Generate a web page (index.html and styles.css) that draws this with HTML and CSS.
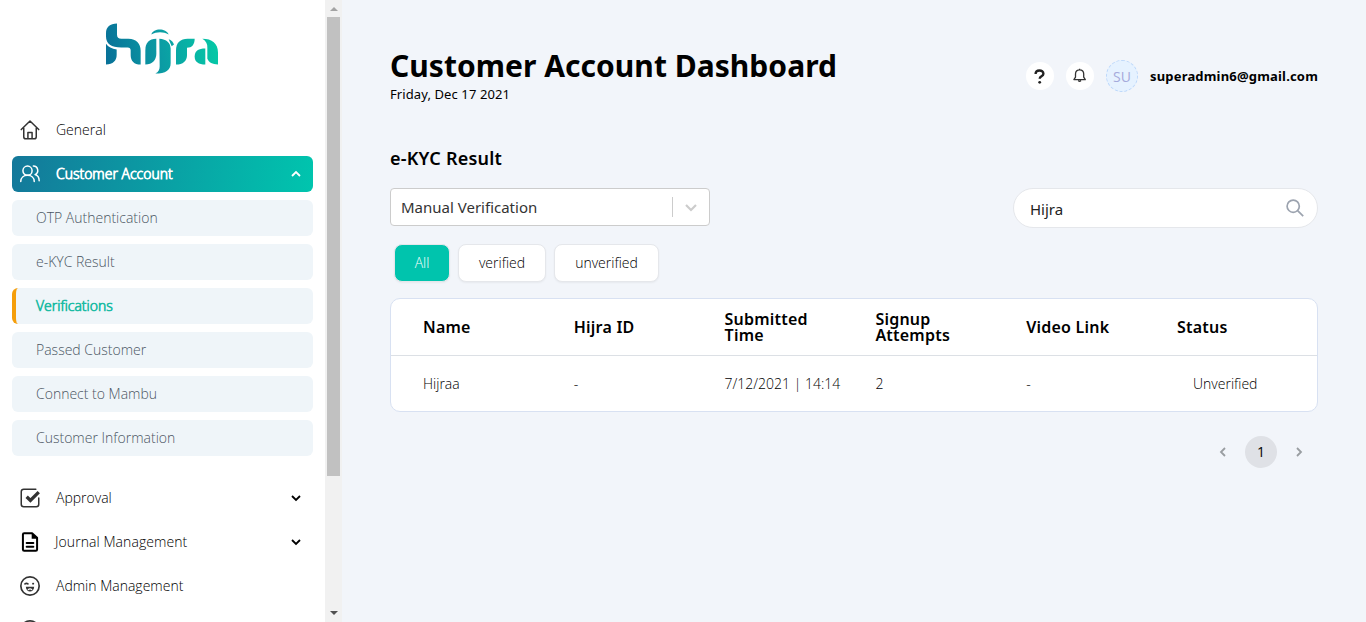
FILE: index.html
```html
<!DOCTYPE html>
<html lang="en">
<head>
<meta charset="utf-8">
<title>Customer Account Dashboard</title>
<link rel="stylesheet" href="styles.css">
</head>
<body>
<div class="app">
  <aside class="sidebar">
    <div class="brand">
      <svg class="logo" viewBox="48 38 336 152" role="img" aria-label="hijra">
        <defs>
          <linearGradient id="brand" gradientUnits="userSpaceOnUse" x1="48" y1="150" x2="384" y2="100">
            <stop offset="0" stop-color="#087198"/><stop offset=".5" stop-color="#0b9da4"/><stop offset="1" stop-color="#05c9a6"/>
          </linearGradient>
        </defs>
        <g fill="url(#brand)">
          <path d="M81 39v33q0 13 13 13h21c25 0 37 15 37 36v41c-20 0-30-11-30-28v-14q0-9-9-9H94C64 111 48 100 48 78V68C48 50 60 39 81 39z"/>
          <path d="M48 100c7 10 17 15 32 17v16c0 18-11 29-32 29z"/>
          <path d="M184 72c6-20 44-20 52 0-16-9-36-9-52 0z"/>
          <path d="M166 162v-43c0-21 11-34 33-34v44c0 20-12 33-33 33z"/>
          <path d="M208 85c22 2 33 12 34 29v44c0 21-15 31-46 31 10-5 13-12 13-22z"/>
          <path d="M236 86c8 2 13 8 16 16l-7 5z"/>
          <path d="M258 162v-42c0-23 13-35 35-35h21c0 17-8 27-23 27v22c0 17-12 28-33 28z"/>
          <path d="M337 85c29 0 47 14 47 41v36c-17 0-27-6-32-17V112c1-11-4-20-15-27z"/>
          <path d="M346 114v48c-20 0-32-7-32-24s12-24 32-24z"/>
        </g>
      </svg>
    </div>
    <nav class="nav">
      <a class="item">
        <svg class="icon" viewBox="0 0 24 24"><path d="M1.500 11.500 12 1.300l10.500 10.200M4.500 10v10q0 2.500 2.500 2.500h10q2.500 0 2.500-2.500V10M9.500 22v-7h5V22"/></svg>
        <span>General</span>
      </a>
      <a class="item open">
        <svg class="icon" viewBox="0 0 24 24"><circle cx="9" cy="8" r="5.500"/><path d="M.9 21c0-4.500 3.500-7.500 8.100-7.500s8.100 3 8.100 7.500M16 2.500a5.300 5.300 0 0 1 2 10.200c3 .8 5 4 5 7.500"/></svg>
        <span>Customer Account</span>
        <svg class="chev" viewBox="0 0 10 10"><path d="m1 7 4-4 4 4"/></svg>
      </a>
      <div class="sub">
        <a class="child">OTP Authentication</a>
        <a class="child">e-KYC Result</a>
        <a class="child current">Verifications</a>
        <a class="child">Passed Customer</a>
        <a class="child">Connect to Mambu</a>
        <a class="child">Customer Information</a>
      </div>
      <a class="item">
        <svg class="icon" viewBox="0 0 24 24"><path d="M19 1.500H4.500q-3 0-3 3v15q0 3 3 3h15q3 0 3-3V12"/><path class="tick" d="m8 10.500 4.500 4.500 10-10"/></svg>
        <span>Approval</span>
        <svg class="chev" viewBox="0 0 10 10"><path d="m1 3 4 4 4-4"/></svg>
      </a>
      <a class="item">
        <svg class="icon file" viewBox="0 0 24 24"><path d="M14.500 1.500H5q-1.500 0-1.500 1.500v18q0 1.500 1.500 1.500h14q1.500 0 1.500-1.500V7z"/><path class="fold" d="M14 1v7h7z"/><path d="M8 13.200h8M8 17.800h8"/></svg>
        <span class="journal">Journal Management</span>
        <svg class="chev" viewBox="0 0 10 10"><path d="m1 3 4 4 4-4"/></svg>
      </a>
      <a class="item">
        <svg class="icon face" viewBox="0 0 24 24"><circle cx="12" cy="12" r="11"/><path d="M6 9.500q1.800-1.500 3.500 0M15.500 9.200h.5"/><path class="mouth" d="M7 13h10c0 7.500-10 7.500-10 0z"/><path class="tongue" d="M10 16.300q2-1.500 4 0"/></svg>
        <span>Admin Management</span>
      </a>
      <a class="item">
        <svg class="icon face" viewBox="0 0 24 24"><circle cx="12" cy="12" r="11"/></svg>
      </a>
    </nav>
  </aside>
  <div class="scrollbar">
    <svg class="arrow up" viewBox="0 0 8 4"><path d="M0 4 4 0l4 4z"/></svg>
    <div class="thumb"></div>
    <svg class="arrow" viewBox="0 0 8 4"><path d="m0 0 4 4 4-4z"/></svg>
  </div>
  <main class="main">
    <header class="header">
      <div>
        <h1 class="title">Customer Account Dashboard</h1>
        <p class="date">Friday, Dec 17 2021</p>
      </div>
      <div class="user">
        <span class="round"><svg viewBox="0 0 16 16"><path class="question" d="M3.600 6C3.600 1.400 11.400 1.400 11.400 5.800c0 2.700-3.700 2.400-3.700 5"/><circle class="dot" cx="7.700" cy="14.300" r="1.400"/></svg></span>
        <span class="round"><svg viewBox="0 0 16 16"><path class="bell" d="M1.900 11.600 3.500 9.100V6c0-5.600 8.200-5.600 8.200 0v3.100l1.600 2.500zM6.300 12.500q1.300 1.700 2.600 0M7.600 1.800V.7"/></svg></span>
        <span class="avatar">SU</span>
        <span class="email">superadmin6@gmail.com</span>
      </div>
    </header>
    <h2 class="section">e-KYC Result</h2>
    <div class="controls">
      <div class="select">
        <span class="value">Manual Verification</span>
        <span class="caret"><svg viewBox="0 0 20 20"><path d="m5 8 5 5 5-5"/></svg></span>
      </div>
      <div class="search">
        <span>Hijra</span>
        <svg viewBox="0 0 18 18"><circle cx="7.200" cy="7.200" r="6.100"/><path d="m11.600 11.600 5.600 5.600"/></svg>
      </div>
    </div>
    <div class="filters">
      <button class="pill on">All</button>
      <button class="pill verified">verified</button>
      <button class="pill unverified">unverified</button>
    </div>
    <section class="table">
      <div class="row head">
        <div>Name</div><div>Hijra ID</div><div>Submitted<br>Time</div><div>Signup<br>Attempts</div><div>Video Link</div><div>Status</div>
      </div>
      <div class="row">
        <div>Hijraa</div><div>-</div><div class="time">7/12/2021 | 14:14</div><div>2</div><div>-</div><div class="status">Unverified</div>
      </div>
    </section>
    <div class="pager">
      <svg viewBox="0 0 12 12"><path d="M8 2 4 6l4 4"/></svg>
      <span class="page">1</span>
      <svg viewBox="0 0 12 12"><path d="m4 2 4 4-4 4"/></svg>
    </div>
  </main>
</div>
</body>
</html>
```
FILE: styles.css
```css
* { box-sizing: border-box; }
body { margin: 0; font-family: "Open Sans", "Noto Sans", sans-serif; color: #000; }
svg { display: block; fill: none; flex: none; }
.app { display: flex; height: 622px; overflow: hidden; background: #f2f5fa; }

.sidebar { width: 325px; flex: none; overflow: hidden; background: #fff; }
.brand { height: 112px; padding: 22.500px 0 0 106px; }
.logo { width: 112px; height: 51px; }
.nav { display: flex; flex-direction: column; gap: 8px; padding: 0 12px; }
.item { display: flex; align-items: center; flex: none; height: 36px; padding: 0 12px 0 8px; border-radius: 6px; font-size: 14px; font-weight: 300; }
.item span { margin-left: 16px; padding-bottom: 2px; }
.item .journal { margin-left: 15px; letter-spacing: .07px; }
.icon { width: 20px; height: 20px; stroke: #333; stroke-width: 1.800; stroke-linecap: round; stroke-linejoin: round; }
.tick { stroke-width: 4; stroke-linecap: butt; stroke-linejoin: miter; }
.file { stroke: #000; stroke-width: 2.400; }
.fold { fill: #000; stroke: none; }
.face { stroke-width: 2; }
.mouth { fill: #333; stroke: none; }
.tongue { stroke: #fff; stroke-width: 1.500; }
.chev { width: 10px; height: 10px; margin-left: auto; stroke: #000; stroke-width: 1.800; }
.open { background: linear-gradient(100deg, #14789a, #00c5ae); color: #fff; -webkit-text-stroke: .8px #fff; }
.open .icon, .open .chev { stroke: #fff; }
.sub { display: flex; flex-direction: column; gap: 8px; margin-bottom: 16px; }
.child { display: flex; align-items: center; height: 36px; padding: 0 0 2px 24px; border-radius: 6px; background: #eff5f9; color: #4b5563; font-size: 14px; font-weight: 300; }
.current { padding-left: 20px; border-left: 4px solid #f59e0b; color: #1cbba4; -webkit-text-stroke: .7px #1cbba4; }

.scrollbar { display: flex; flex-direction: column; align-items: center; width: 17px; flex: none; padding: 7px 0; background: #f1f1f1; }
.arrow { width: 8px; height: 4px; fill: #505050; }
.up { fill: #a3a3a3; }
.thumb { width: 13px; height: 459px; margin: 6px 0 auto; background: #c1c1c1; }

.main { flex: 1; min-width: 0; padding: 48px 48px 0; }
.header { display: flex; justify-content: space-between; }
.title { margin: 0; font: 700 30px/36px "Noto Sans", sans-serif; letter-spacing: .03px; }
.date { margin: 0; font: 400 13px/20px "Noto Sans", sans-serif; letter-spacing: .1px; }
.user { display: flex; align-items: center; height: 56px; }
.round { display: grid; place-items: center; width: 28px; height: 28px; margin-right: 12px; border-radius: 50%; background: #fff; }
.round svg { width: 16px; height: 16px; }
.question { stroke: #222; stroke-width: 2.400; }
.dot { fill: #222; }
.bell { stroke: #333; stroke-width: 1.300; stroke-linejoin: round; }
.avatar { display: grid; place-items: center; width: 32px; height: 32px; margin-right: 12px; border: 1px dashed #bdd8fb; border-radius: 50%; background: #e6f2ff; color: #a5aadb; font-size: 14px; }
.email { width: 168px; font: 700 13px "Noto Sans", sans-serif; letter-spacing: .18px; white-space: nowrap; }
.section { margin: 40px 0 0; font: 600 18px/28px "Noto Sans", sans-serif; letter-spacing: .22px; }
.controls { display: flex; justify-content: space-between; margin-top: 16px; }
.select { display: flex; align-items: center; width: 320px; height: 38px; padding-left: 10px; border: 1px solid #ccc; border-radius: 4px; background: #fff; color: #333; font: 400 15px "Noto Sans", sans-serif; }
.caret { margin-left: auto; padding: 0 8px; border-left: 1px solid #ccc; }
.caret svg { width: 20px; height: 20px; stroke: #ccc; stroke-width: 2.200; }
.search { display: flex; align-items: center; justify-content: space-between; width: 305px; height: 40px; padding: 1px 13px 0 16px; border: 1px solid #e5e7eb; border-radius: 20px; background: #fff; font: 400 15px "Noto Sans", sans-serif; color: #222; }
.search svg { width: 18px; height: 18px; margin-bottom: 2px; stroke: #9ca3af; stroke-width: 1.700; }
.filters { display: flex; gap: 8px; margin: 16px 0 0 4px; }
.pill { width: 56px; height: 38px; padding: 0 0 2px; border: 1px solid #e5e7eb; border-radius: 8px; background: #fff; box-shadow: 0 1px 2px #0000000d; font: 300 14px "Open Sans", sans-serif; color: #000; }
.on { background: #00c4ad; color: #fff; }
.verified { width: 88px; }
.unverified { width: 105px; }
.table { height: 114px; margin-top: 16px; border: 1px solid #d8e1f2; border-radius: 10px; background: #fff; }
.row { display: grid; grid-template-columns: repeat(5, 150.800px) 1fr; align-items: center; height: 55px; padding-left: 32px; font-size: 14px; font-weight: 300; }
.head { height: 57px; border-bottom: 1px solid #dce0e5; font: 600 16px/16px "Noto Sans", sans-serif; letter-spacing: .22px; }
.status { padding-left: 16px; }
.pager { display: flex; align-items: center; justify-content: flex-end; gap: 16px; margin: 24px 13px 0; }
.pager svg { width: 12px; height: 12px; stroke: #999da1; stroke-width: 1.800; }
.page { display: grid; place-items: center; width: 32px; height: 32px; padding-bottom: 2px; border-radius: 50%; background: #dfe1e6; font-size: 14px; }
```
